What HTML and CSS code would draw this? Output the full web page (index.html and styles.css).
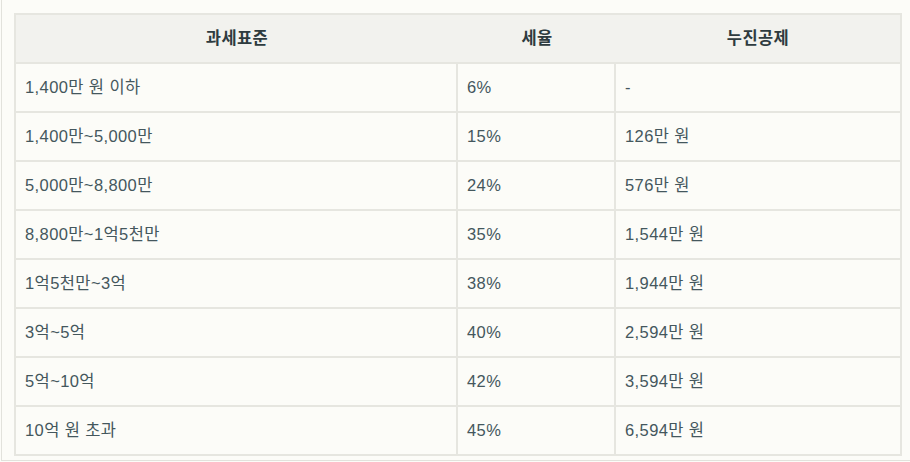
FILE: index.html
```html
<!DOCTYPE html>
<html lang="ko">
<head>
<meta charset="utf-8">
<link rel="stylesheet" href="styles.css">
</head>
<body>
<div class="frame">
<table class="tax">
<colgroup><col class="c1"><col class="c2"><col class="c3"></colgroup>
<thead>
<tr><th>과세표준</th><th>세율</th><th>누진공제</th></tr>
</thead>
<tbody>
<tr><td>1,400만 원 이하</td><td>6%</td><td>-</td></tr>
<tr><td>1,400만~5,000만</td><td>15%</td><td>126만 원</td></tr>
<tr><td>5,000만~8,800만</td><td>24%</td><td>576만 원</td></tr>
<tr><td>8,800만~1억5천만</td><td>35%</td><td>1,544만 원</td></tr>
<tr><td>1억5천만~3억</td><td>38%</td><td>1,944만 원</td></tr>
<tr><td>3억~5억</td><td>40%</td><td>2,594만 원</td></tr>
<tr><td>5억~10억</td><td>42%</td><td>3,594만 원</td></tr>
<tr><td>10억 원 초과</td><td>45%</td><td>6,594만 원</td></tr>
</tbody>
</table>
</div>
</body>
</html>
```
FILE: styles.css
```css
html, body {
  margin: 0;
  background: #fcfcf8;
}
.frame {
  box-sizing: border-box;
  height: 461px;
  margin-left: 1px;
  border-left: 1px solid #e2e2dc;
  border-bottom: 1px solid #e2e2dc;
  padding: 13px 0 0 12px;
  font-family: "Liberation Sans", "Noto Sans CJK KR", sans-serif;
}
.tax {
  width: 888px;
  border-collapse: separate;
  border-spacing: 0;
  border: 2px solid #e6e6e0;
  background: #fcfcf8;
  color: #44575d;
  font-size: 16.5px;
  letter-spacing: 0.4px;
  line-height: 20px;
}
.c1 { width: 442px; }
.c2 { width: 158px; }
.tax th {
  background: #f2f2ee;
  color: #2e3b3f;
  font-weight: 700;
  text-align: center;
  padding: 13px 9px 14px;
  border-bottom: 2px solid #e6e6e0;
}
.tax td {
  padding: 13px 9px 14px;
  text-align: left;
  border-bottom: 2px solid #e6e6e0;
  border-right: 2px solid #e6e6e0;
}
.tax td:last-child { border-right: 0; }
.tax tbody tr:last-child td { border-bottom: 0; }
```
